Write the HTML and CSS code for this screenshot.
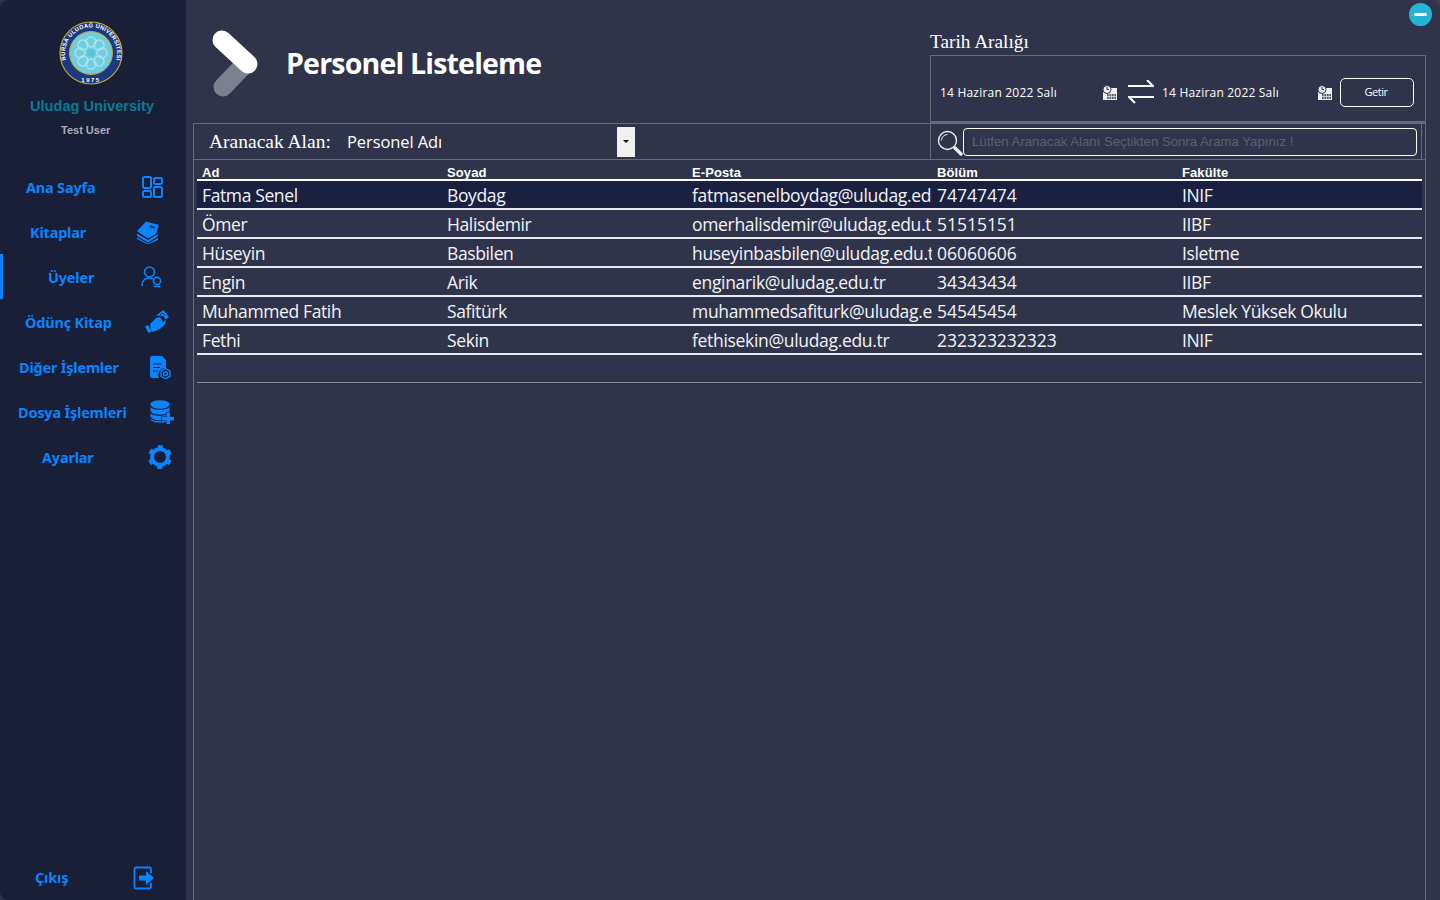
FILE: index.html
```html
<!DOCTYPE html>
<html lang="tr">
<head>
<meta charset="utf-8">
<title>Personel Listeleme</title>
<link rel="stylesheet" href="styles.css">
</head>
<body>
<div class="window">
  <aside class="sidebar">
    <svg class="logo" viewBox="0 0 64 64" width="64" height="64">
      <defs><path id="ring-top" d="M9 44.500 A26 26 0 1 1 55 44.500"/></defs>
      <circle cx="32" cy="32" r="31" fill="#1b3a80" stroke="#c9a52a" stroke-width="1.200"/>
      <circle cx="32" cy="32" r="21.500" fill="#6fcdde" stroke="#c9a52a" stroke-width="1"/>
      <g fill="none" stroke="#a9e4ec" stroke-width="1.400">
        <circle cx="32" cy="21" r="5"/><circle cx="32" cy="43" r="5"/><circle cx="21" cy="32" r="5"/><circle cx="43" cy="32" r="5"/>
        <circle cx="24" cy="24" r="5"/><circle cx="40" cy="24" r="5"/><circle cx="24" cy="40" r="5"/><circle cx="40" cy="40" r="5"/>
      </g>
      <rect x="28.500" y="28.500" width="7" height="7" fill="#5cc3d6"/>
      <text class="logo-ring"><textPath href="#ring-top" startOffset="50%" text-anchor="middle">BURSA ULUDAĞ ÜNİVERSİTESİ</textPath></text>
      <text class="logo-year" x="32" y="60.500" text-anchor="middle">1975</text>
    </svg>
    <div class="brand">Uludag University</div>
    <div class="user">Test User</div>
    <nav class="nav">
      <a class="nav-item nav-home"><span class="nav-label">Ana Sayfa</span>
        <svg class="nav-icon" viewBox="0 0 24 24" width="24" height="24" fill="none" stroke="#0a84ff" stroke-width="2"><rect x="3" y="2" width="8" height="11" rx="1.500"/><rect x="14" y="3" width="8" height="6" rx="1.500"/><rect x="3" y="16" width="8" height="6" rx="1.500"/><rect x="14" y="12" width="8" height="10" rx="1.500"/></svg></a>
      <a class="nav-item nav-books"><span class="nav-label">Kitaplar</span>
        <svg class="nav-icon" viewBox="0 0 24 24" width="24" height="24" fill="#0a84ff"><path d="M1 11 10 1.500 23 5l-3 9-8 4.500z"/><path d="M14 5.500l5.500 1.500-.5 1.500-5.500-1.500z" fill="#181f37"/><path d="M1 13.500l11 6.500 9.500-5.500.8 1.800L12 22.500 1 16z"/><path d="M1 17.500l11 6 10-5.500v2l-10 4.500-11-5.500z"/></svg></a>
      <a class="nav-item nav-members active"><span class="nav-label">Üyeler</span>
        <svg class="nav-icon" viewBox="0 0 24 24" width="24" height="24" fill="none" stroke="#0a84ff" stroke-width="1.600"><circle cx="9.500" cy="7" r="5"/><path d="M2 21c0-5 3-8 7.500-8 1.500 0 2.600.3 3.500.8"/><circle cx="17" cy="16" r="3.600"/><path d="M13.500 21.500h7"/></svg></a>
      <a class="nav-item nav-loan"><span class="nav-label">Ödünç Kitap</span>
        <svg class="nav-icon" viewBox="0 0 24 24" width="24" height="24" fill="#0a84ff"><path d="M0 16.500l3-1.500 3.500 6.500-3 1.500z"/><path d="M5 14l6-6 4-1 3 5 3-2-1 4-5 5-7 3-2-1z"/><path d="M11 5.500 18.500 0 24 7l-3.500 2.500-2-3.500z"/><path d="M15 5l3-2 2 2.500" fill="none" stroke="#181f37" stroke-width=".8"/></svg></a>
      <a class="nav-item nav-other"><span class="nav-label">Diğer İşlemler</span>
        <svg class="nav-icon" viewBox="0 0 24 24" width="24" height="24"><path d="M2 3a2 2 0 0 1 2-2h10l4 4v8a7 7 0 0 0-7 10H4a2 2 0 0 1-2-2z" fill="#0a84ff"/><path d="M5 9h9M5 12.500h7M5 16h5" stroke="#181f37" stroke-width="1.200"/><path d="M17.500 13.500l4.500 2.600v5.200l-4.500 2.600-4.500-2.600v-5.200z" fill="none" stroke="#0a84ff" stroke-width="1.400"/><circle cx="17.500" cy="18.700" r="2" fill="none" stroke="#0a84ff" stroke-width="1.400"/></svg></a>
      <a class="nav-item nav-files"><span class="nav-label">Dosya İşlemleri</span>
        <svg class="nav-icon" viewBox="0 0 24 24" width="24" height="24"><path d="M.5 4a9.500 3.800 0 0 1 19 0v15a9.500 3.800 0 0 1-19 0z" fill="#0a84ff"/><path d="M.5 5.500a9.500 3.800 0 0 0 19 0M.5 11.500a9.500 3.800 0 0 0 19 0M.5 17a9.500 3.800 0 0 0 19 0" fill="none" stroke="#181f37" stroke-width="1.200"/><path d="M16.500 12.500h3.500v4.500H24v3.500h-4v3.500h-3.500v-3.500H12V17h4.500z" fill="#0a84ff" stroke="#181f37" stroke-width="1.200" paint-order="stroke"/></svg></a>
      <a class="nav-item nav-settings"><span class="nav-label">Ayarlar</span>
        <svg class="nav-icon" viewBox="0 0 24 24" width="24" height="24" fill="none" stroke="#0a84ff"><circle cx="12" cy="12" r="8" stroke-width="4"/><circle cx="12" cy="12" r="10.500" stroke-width="3" stroke-dasharray="5 6" stroke-dashoffset="-3"/></svg></a>
      <a class="nav-item nav-exit"><span class="nav-label">Çıkış</span>
        <svg class="nav-icon" viewBox="0 0 24 24" width="24" height="24" fill="none" stroke="#0a84ff" stroke-width="1.800"><path d="M19 7V3a1.500 1.500 0 0 0-1.500-1.500H4A1.500 1.500 0 0 0 2.500 3v18A1.500 1.500 0 0 0 4 22.500h13.500A1.500 1.500 0 0 0 19 21v-4"/><path d="M7 9.500h7V5l8 7-8 7v-4.500H7z" fill="#0a84ff" stroke="none"/></svg></a>
    </nav>
  </aside>

  <main class="main">
    <button class="minimize" aria-label="Küçült"><span class="minimize-dash"></span></button>
    <header class="header">
      <svg class="chevron" viewBox="0 0 46 68" width="46" height="68">
        <path d="M33 34 11 57" stroke="#7d808f" stroke-width="19" stroke-linecap="round"/>
        <path d="M10 10 36 34" stroke="#fff" stroke-width="19" stroke-linecap="round"/>
      </svg>
      <h1 class="title">Personel Listeleme</h1>
      <section class="dates">
        <div class="dates-label">Tarih Aralığı</div>
        <div class="dates-box">
          <span class="date date-first">14 Haziran 2022 Salı</span>
          <svg class="cal" viewBox="0 0 16 16" width="16" height="16"><path d="M1 3h14v12H1z" fill="#eee"/><circle cx="5" cy="4.500" r="4" fill="#eee" stroke="#2f344b"/><path d="M5 2v2.500h2" fill="none" stroke="#2f344b"/><path d="M5 9h9v5H5z" fill="#555b6c"/><path d="M7 9v5M9.500 9v5M12 9v5M5 11.500h9" stroke="#eee" stroke-width=".7"/></svg>
          <svg class="swap" viewBox="0 0 26 26" width="26" height="26" fill="none" stroke="#fff" stroke-width="2"><path d="M0 6h25l-6-6"/><path d="M26 17H1l6 6"/></svg>
          <span class="date date-second">14 Haziran 2022 Salı</span>
          <svg class="cal" viewBox="0 0 16 16" width="16" height="16"><path d="M1 3h14v12H1z" fill="#eee"/><circle cx="5" cy="4.500" r="4" fill="#eee" stroke="#2f344b"/><path d="M5 2v2.500h2" fill="none" stroke="#2f344b"/><path d="M5 9h9v5H5z" fill="#555b6c"/><path d="M7 9v5M9.500 9v5M12 9v5M5 11.500h9" stroke="#eee" stroke-width=".7"/></svg>
          <button class="fetch">Getir</button>
        </div>
      </section>
    </header>

    <section class="panel">
      <div class="search-row">
        <div class="field">
          <span class="field-label">Aranacak Alan:</span>
          <span class="field-value">Personel Adı</span>
          <span class="field-drop"><span class="caret"></span></span>
        </div>
        <div class="search">
          <svg class="lens" viewBox="0 0 26 26" width="26" height="26" fill="none" stroke="#eee"><circle cx="10.500" cy="10.500" r="9" stroke-width="1.400"/><path d="M4.500 10.500a6 6 0 0 1 6-6" stroke-width="1"/><path d="M18 18l6 6" stroke-width="3.400" stroke-linecap="round"/></svg>
          <div class="search-input">Lütfen Aranacak Alanı Seçtikten Sonra Arama Yapınız !</div>
        </div>
      </div>
      <div class="table">
        <div class="thead"><span>Ad</span><span>Soyad</span><span>E-Posta</span><span>Bölüm</span><span>Fakülte</span></div>
        <div class="row selected"><span>Fatma Senel</span><span>Boydag</span><span>fatmasenelboydag@uludag.edu.tr</span><span>74747474</span><span>INIF</span></div>
        <div class="row"><span>Ömer</span><span>Halisdemir</span><span>omerhalisdemir@uludag.edu.tr</span><span>51515151</span><span>IIBF</span></div>
        <div class="row"><span>Hüseyin</span><span>Basbilen</span><span>huseyinbasbilen@uludag.edu.tr</span><span>06060606</span><span>Isletme</span></div>
        <div class="row"><span>Engin</span><span>Arik</span><span>enginarik@uludag.edu.tr</span><span>34343434</span><span>IIBF</span></div>
        <div class="row"><span>Muhammed Fatih</span><span>Safitürk</span><span>muhammedsafiturk@uludag.edu.tr</span><span>54545454</span><span>Meslek Yüksek Okulu</span></div>
        <div class="row"><span>Fethi</span><span>Sekin</span><span>fethisekin@uludag.edu.tr</span><span>232323232323</span><span>INIF</span></div>
        <div class="row empty"></div>
      </div>
    </section>
  </main>
</div>
</body>
</html>
```
FILE: styles.css
```css
* { box-sizing: border-box; }
html, body { margin: 0; height: 100%; overflow: hidden; background: #3b3d47; }
body { font-family: "Open Sans", "Noto Sans", sans-serif; color: #fff; }

.window { display: flex; width: 1440px; height: 900px; background: #2f344b; border-top-right-radius: 10px; }

/* Sidebar */
.sidebar { width: 186px; height: 900px; flex: none; background: #181f37; border-radius: 8px 0 0 8px; display: flex; flex-direction: column; align-items: flex-start; padding-top: 21px; position: relative; }
.logo { display: block; margin-left: 59px; }
.logo-ring { font: 700 5.800px "Liberation Sans", sans-serif; fill: #fff; letter-spacing: .25px; }
.logo-year { font: 700 6px "Liberation Sans", sans-serif; fill: #fff; letter-spacing: 1.500px; }
.brand { margin: 12px 0 0 30px; font: 700 14.600px/18px "Liberation Sans", sans-serif; color: #0b7a92; white-space: nowrap; }
.user { margin: 8px 0 0 61px; font: 700 11px/14px "Liberation Sans", sans-serif; color: #a9adbd; }

.nav { flex: 1; width: 100%; display: flex; flex-direction: column; margin-top: 27px; }
.nav-item { display: flex; align-items: center; height: 45px; flex: none; color: #0a84ff; border-left: 3px solid transparent; position: relative; }
.nav-item.active { border-left-color: #0a84ff; }
.nav-label { font: 700 14.500px/20px "Noto Sans", sans-serif; white-space: nowrap; margin-left: var(--lx); letter-spacing: -.2px; }
.nav-icon { display: block; margin-left: auto; margin-right: var(--ir); }
.nav-home { --lx: 23px; --ir: 22px; }
.nav-books { --lx: 27px; --ir: 26px; }
.nav-members { --lx: 45px; --ir: 22px; }
.nav-loan { --lx: 22px; --ir: 17px; }
.nav-other { --lx: 16px; --ir: 14px; }
.nav-files { --lx: 15px; --ir: 12px; }
.nav-settings { --lx: 39px; --ir: 14px; }
.nav-exit { --lx: 32px; --ir: 30px; margin-top: auto; height: 44px; }
.nav-exit .nav-label { margin-bottom: 2px; }

/* Main */
.main { flex: 1; min-width: 0; padding: 0 14px 0 7px; display: flex; flex-direction: column; position: relative; }
.minimize { position: absolute; top: 3px; right: 8px; width: 23px; height: 23px; border: 0; padding: 0; border-radius: 50%; background: #24b5d6; display: flex; align-items: center; justify-content: center; }
.minimize-dash { width: 13px; height: 3px; border-radius: 2px; background: #fff; }

.header { height: 123px; flex: none; display: flex; align-items: center; }
.chevron { display: block; margin: 5px 0 0 19px; flex: none; }
.title { margin: 0 0 0 28px; font: 700 28.500px/40px "Open Sans", sans-serif; letter-spacing: -.8px; align-self: flex-start; padding-top: 43px; white-space: nowrap; }

.dates { margin-left: auto; width: 496px; align-self: stretch; display: flex; flex-direction: column; justify-content: flex-end; }
.dates-label { font: 19.300px/22px "Liberation Serif", serif; color: #fff; height: 24px; }
.dates-box { height: 68px; border: 1px solid #686a75; border-bottom-width: 2px; display: flex; align-items: center; padding: 9px 0 0 9px; }
.date { font: 12px/16px "Open Sans", sans-serif; letter-spacing: .2px; white-space: nowrap; }
.date-first { width: 162px; }
.date-second { width: 155px; }
.cal { flex: none; }
.swap { flex: none; margin: 0 8px 0 10px; }
.fetch { width: 74px; height: 29px; margin-left: 7px; background: transparent; color: #fff; border: 1px solid #fff; border-radius: 5px; font: 11px/14px "Open Sans", sans-serif; letter-spacing: -.45px; padding: 0 2px 0 0; margin-bottom: 2px; }

/* Panel */
.panel { flex: 1; border-left: 1px solid #686a75; border-right: 1px solid #686a75; display: flex; flex-direction: column; }
.search-row { height: 37px; flex: none; display: flex; border-top: 1px solid #686a75; border-bottom: 1px solid #686a75; }
.field { width: 736px; flex: none; display: flex; align-items: center; padding-left: 15px; }
.field-label { font: 19.500px/24px "Liberation Serif", serif; width: 138px; flex: none; white-space: nowrap; }
.field-value { font: 16.500px/22px "Open Sans", sans-serif; letter-spacing: -.1px; width: 270px; flex: none; white-space: nowrap; }
.field-drop { width: 18px; height: 30px; background: #f0f0f0; display: flex; align-items: center; justify-content: center; }
.caret { width: 0; height: 0; border: 3px solid transparent; border-top-color: #111; border-bottom-width: 0; }
.search { flex: 1; display: flex; align-items: center; border-left: 1px solid #686a75; padding-left: 6px; position: relative; }
.search::after { content: ""; position: absolute; right: 3px; top: 0; bottom: 0; width: 1px; background: #686a75; }
.lens { flex: none; margin-top: 2px; }
.search-input { width: 454px; height: 28px; border: 1px solid #fff; border-radius: 4px; padding-left: 8px; font: 13.200px/26px "Liberation Sans", sans-serif; color: #5d616f; white-space: nowrap; flex: none; }

.table { margin: 0 3px; flex: none; }
.thead, .row { display: grid; grid-template-columns: repeat(5, 245px); }
.thead { height: 21px; border-bottom: 2px solid #fff; padding-top: 5px; font: 700 13px/15px "Liberation Sans", sans-serif; letter-spacing: .1px; }
.thead span { margin-left: 5px; }
.row { height: 29px; border-bottom: 2px solid #e8e8ee; font: 17.500px/28px "Open Sans", sans-serif; letter-spacing: -.38px; color: #f3f3f6; }
.row span { margin-left: 5px; width: 240px; overflow: hidden; white-space: nowrap; }
.row span:nth-child(3) { letter-spacing: -.32px; }
.row span:nth-child(4) { letter-spacing: -.03px; }
.selected { background: #1a2140; }
.empty { height: 28px; border-bottom: 1px solid #8b8d96; }
```
